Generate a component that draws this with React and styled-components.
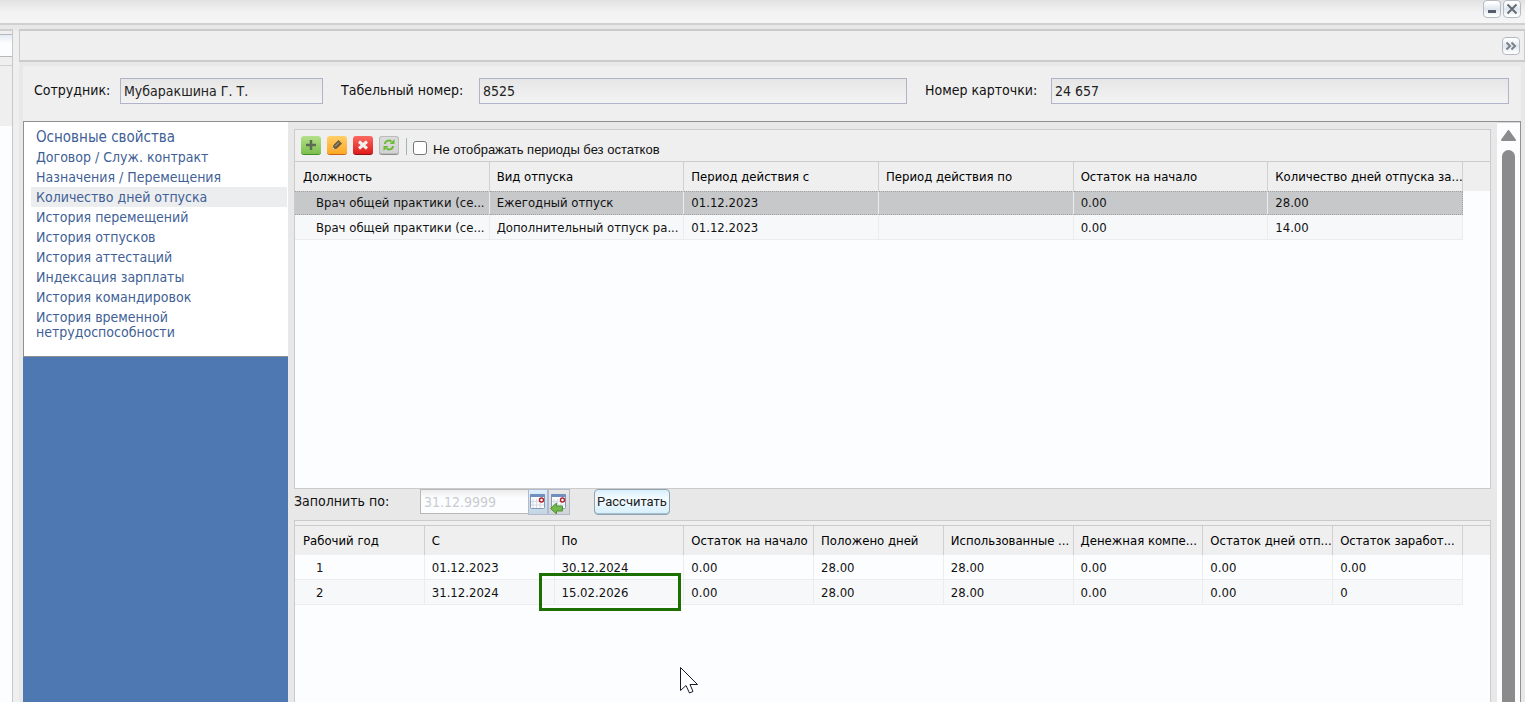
import React from "react";
import styled, { createGlobalStyle, css } from "styled-components";

const Global = createGlobalStyle`
  *, *::before, *::after { box-sizing: border-box; }
  body { margin: 0; background: #e8e8e8; color: #111; font: 13px/20px Tahoma, "DejaVu Sans Condensed", "Noto Sans", sans-serif; }
`;

const wide = css`font-family: Tahoma, "DejaVu Sans Condensed", "Noto Sans", sans-serif;`;

const Page = styled.div`
  position: relative;
  display: flex;
  flex-direction: column;
  min-height: 100vh;
  overflow: hidden;
`;

const TitleBar = styled.header`
  display: flex;
  justify-content: flex-end;
  gap: 2px;
  height: 25px;
  padding: 0 4px 0 0;
  border-bottom: 2px solid #d0d0d0;
  background: linear-gradient(#e2e2e2, #f2f2f2 50%, #f5f5f5);
`;

const ToolButton = styled.button`
  display: flex;
  width: 18px;
  height: 18px;
  padding: 0;
  border: 1px solid #b3bac1;
  border-radius: 4px;
  background: linear-gradient(#fff 10%, #dfe7ef 50%, #fff 95%);
`;

const Workspace = styled.div`
  display: flex;
  flex: 1;
  padding-top: 4px;
`;

const SideStrip = styled.aside`
  display: flex;
  flex-direction: column;
  width: 13px;
  border-top: 2px solid #cfcfcf;
  border-right: 1px solid #c8c8c8;
  background: #efefef;
`;

const StripField = styled.div`
  height: 23px;
  margin-top: 3px;
  border: solid #b8b8b8;
  border-width: 1px 0;
  background: linear-gradient(#e4ecf4, #fcfdff 40%);
`;

const StripHead = styled.div`
  height: 61px;
  margin-top: 8px;
  border-top: 1px solid #d0d0d0;
`;

const StripBody = styled.div`
  flex: 1;
  background: #fcfdff;
`;

const Splitter = styled.div`
  width: 6px;
  border-top: 2px solid #e8e8e8;
  background: #efefef;
`;

const Card = styled.section`
  display: flex;
  flex: 1;
  flex-direction: column;
  min-width: 0;
`;

const CardHead = styled.div`
  display: flex;
  align-items: center;
  justify-content: flex-end;
  height: 33px;
  padding-right: 4px;
  border: 1px solid #cbcbcb;
  border-width: 2px 1px 2px 1px;
  background: #efefef;
`;

const CardBody = styled.div`
  display: flex;
  flex: 1;
  flex-direction: column;
  margin: 4px 4px 0;
  background: #efefef;
`;

const Form = styled.form`
  display: flex;
  gap: 18px;
  padding: 12px 12px 17px 11px;
`;

const Field = styled.div`
  display: flex;
  flex: ${(p) => p.$flex};
  min-width: 0;
`;

const Label = styled.label`
  ${wide}
  flex: 0 0 ${(p) => p.$width}px;
  font-size: 14px;
  line-height: 24px;
  white-space: nowrap;
`;

const TextBox = styled.input`
  ${wide}
  flex: 1;
  min-width: 0;
  height: 26px;
  padding: 0 3px;
  border: 1px solid #b1b3c8;
  border-radius: 0;
  outline: none;
  background: linear-gradient(#e6e6e6, #f3f3f3);
  color: #222;
  font-size: 14px;
`;

const Content = styled.div`
  display: flex;
  flex: 1;
  border: 1px solid #909090;
  border-bottom: 0;
  background: #e8e8e8;
`;

const Sidebar = styled.nav`
  display: flex;
  flex: 0 0 264px;
  flex-direction: column;
`;

const NavList = styled.div`
  display: flex;
  flex-direction: column;
  height: 235px;
  padding: 5px 0 0 7px;
  border-bottom: 1px solid #8f8f8f;
  background: #fff;
`;

const NavLink = styled.a`
  ${wide}
  margin-right: 1px;
  padding: 0 5px;
  background: ${(p) => (p.$active ? "#ecedef" : "transparent")};
  color: #3f5f96;
  font-size: ${(p) => (p.$main ? 15 : 14)}px;
  line-height: 20px;
  text-decoration: none;
`;

const NavWrapLink = styled(NavLink)`
  padding: 3px 110px 0 5px;
  line-height: 15px;
`;

const Blue = styled.div`
  flex: 1;
  margin: 0 0 0 -1px;
  background: #4e78b2;
`;

const Main = styled.main`
  display: flex;
  flex: 1;
  flex-direction: column;
  min-width: 0;
  padding: 7px 6px 0;
`;

const Grid = styled.section`
  display: flex;
  flex-direction: column;
  flex: ${(p) => p.$flex};
  border: 1px solid #cbcbcb;
  border-bottom-width: ${(p) => (p.$open ? 0 : 1)}px;
  background: #fcfdff;
`;

const Toolbar = styled.div`
  display: flex;
  align-items: flex-start;
  gap: 6px;
  height: 32px;
  padding: 6px;
  border-bottom: 1px solid #cbcbcb;
  background: #efefef;
`;

const SlimBar = styled.div`
  height: 5px;
  border-bottom: 1px solid #cbcbcb;
  background: #efefef;
`;

const tones = {
  green: ["#b4e08a", "#7cc04c", "#3f8f2b"],
  orange: ["#ffcf6a", "#ffa822", "#c8641a"],
  red: ["#fb6a62", "#df1a1a", "#8f1212"],
  gray: ["#dcdcdc", "#d3d3d3", "#8e8e8e"],
};

const IconButton = styled.button`
  display: flex;
  align-items: center;
  justify-content: center;
  width: 20px;
  height: 19px;
  padding: 0;
  border: 0;
  border-bottom: 1px solid ${(p) => tones[p.$tone][2]};
  border-radius: 3px;
  background: linear-gradient(${(p) => tones[p.$tone][0]}, ${(p) => tones[p.$tone][1]});
  box-shadow: ${(p) => (p.$tone === "gray" ? "inset 0 0 0 1px #bcbcbc" : "none")};
`;

const Divider = styled.span`
  width: 1px;
  height: 17px;
  margin: 2px 0 0 1px;
  background: #a3b5ad;
`;

const Check = styled.label`
  display: flex;
  gap: 6px;
  padding-top: 4px;
  font: 13px/20px "Liberation Sans", sans-serif;
`;

const CheckInput = styled.input`
  width: 14px;
  height: 14px;
  margin: 1px 0 0;
  appearance: none;
  border: 1px solid #767676;
  border-radius: 3px;
  background: #fff;
`;

const TableHolder = styled.div`
  padding-right: 27px;
  background: linear-gradient(#efefef 29px, transparent 29px);
`;

const Table = styled.table`
  width: 100%;
  border-collapse: separate;
  border-spacing: 0;
  table-layout: fixed;
`;

const cell = css`
  height: 25px;
  padding: 0 0 0 7px;
  font-weight: 400;
  line-height: 20px;
  text-align: left;
  white-space: nowrap;
  &:first-child { padding-left: 8px; }
`;

const Th = styled.th`
  ${cell}
  height: 29px;
  border-right: 1px solid #d0d0d0;
  color: #000;
`;

const Td = styled.td`
  ${cell}
  padding-top: 2px;
  border-right: 1px solid #ececec;
  border-bottom: 1px solid #ececec;
  &:first-child { padding-left: 21px; }
`;

const Tr = styled.tr`
  background: ${(p) => (p.$selected ? "#c7c8ca" : p.$alt ? "#f7f8fa" : "#fcfdff")};
  ${(p) => p.$selected && css`
    & > td { height: 24px; padding-top: 0; padding-bottom: 1px; border-top: 1px dotted #a0a0a0; border-bottom: 1px dotted #a0a0a0; }
    & > td:last-child { border-right: 1px dotted #a0a0a0; }
  `}
`;

const MarkedTd = styled(Td)`
  position: relative;
  &::after {
    content: "";
    position: absolute;
    inset: -7px 2px -7px -16px;
    border: 3px solid #1c7000;
  }
`;

const FillRow = styled.form`
  display: flex;
  align-items: flex-start;
  height: 31px;
`;

const DateBox = styled(TextBox)`
  flex: 0 0 108px;
  height: 25px;
  border-color: #b8b8b8;
  border-right: 0;
  background: linear-gradient(#ebebeb, #fcfdff 35%);
  color: #c9cbd0;
`;

const DateButton = styled.button`
  display: flex;
  align-items: center;
  justify-content: center;
  width: ${(p) => (p.$lit ? 20 : 22)}px;
  height: 26px;
  padding: 0;
  border: 1px solid #b4b8cc;
  background: ${(p) => (p.$lit ? "linear-gradient(#dceffa, #c2d5e2)" : "linear-gradient(#e8e8e8, #d2d3d6)")};
`;

const PushButton = styled.button`
  min-width: 76px;
  height: 26px;
  margin-left: 24px;
  padding: 0 2px;
  border: 1px solid #8fa3b0;
  border-radius: 4px;
  background: linear-gradient(#d8effb, #f4fcff 35%, #d6effb);
  box-shadow: inset 0 -1px 0 #a9bfcc;
  color: #222;
  font: 13px/22px Roboto, sans-serif;
`;

const Scrollbar = styled.div`
  display: flex;
  flex: 0 0 23px;
  flex-direction: column;
  align-items: center;
  gap: 9px;
  padding-top: 7px;
  border-top: 1px solid #d8d8d8;
  background: #fdfdff;
`;

const Thumb = styled.div`
  flex: 1;
  width: 13px;
  border-radius: 7px 7px 0 0;
  background: #8b8b8b;
`;

const Pointer = styled.svg`
  position: absolute;
  top: 666px;
  left: 679px;
  pointer-events: none;
`;

function Calendar({ back }) {
  return (
    <svg width="18" height="24" viewBox="0 0 18 24" aria-hidden="true">
      <rect x="1.5" y="4.5" width="14" height="14" rx="1" fill="#fbfbfd" stroke="#7f97b8" />
      <rect x="1" y="4" width="15" height="3" rx="1" fill="#6f8fbe" />
      <path d="M4 9v9M7.500 9v9M11 9v9M2 11.500h13M2 15h13" stroke="#d5dae4" fill="none" />
      <circle cx="12.500" cy="10" r="2" fill="#fff" stroke="#b31f2a" strokeWidth="1.400" />
      {back && <path d="M0.500 18.500l6-5.500v3h6v5h-6v3z" fill="#74b84c" stroke="#4b9530" />}
    </svg>
  );
}

const links = [
  "Договор / Служ. контракт",
  "Назначения / Перемещения",
  "Количество дней отпуска",
  "История перемещений",
  "История отпусков",
  "История аттестаций",
  "Индексация зарплаты",
  "История командировок",
];

const periodHead = ["Должность", "Вид отпуска", "Период действия с", "Период действия по", "Остаток на начало", "Количество дней отпуска за..."];
const periodRows = [
  ["Врач общей практики (се...", "Ежегодный отпуск", "01.12.2023", "", "0.00", "28.00"],
  ["Врач общей практики (се...", "Дополнительный отпуск ра...", "01.12.2023", "", "0.00", "14.00"],
];
const yearHead = ["Рабочий год", "С", "По", "Остаток на начало", "Положено дней", "Использованные ...", "Денежная компе...", "Остаток дней отп...", "Остаток заработ..."];
const yearRows = [
  ["1", "01.12.2023", "30.12.2024", "0.00", "28.00", "28.00", "0.00", "0.00", "0.00"],
  ["2", "31.12.2024", "15.02.2026", "0.00", "28.00", "28.00", "0.00", "0.00", "0"],
];

function DataTable({ head, rows, selected, marked }) {
  return (
    <TableHolder>
      <Table>
        <thead>
          <tr>{head.map((h) => <Th key={h} scope="col">{h}</Th>)}</tr>
        </thead>
        <tbody>
          {rows.map((row, r) => (
            <Tr key={r} $selected={selected === r} $alt={r % 2 === 1}>
              {row.map((value, c) => {
                const Cell = marked && marked[0] === r && marked[1] === c ? MarkedTd : Td;
                return <Cell key={c}>{value}</Cell>;
              })}
            </Tr>
          ))}
        </tbody>
      </Table>
    </TableHolder>
  );
}

export default function App() {
  return (
    <Page>
      <Global />
      <TitleBar>
        <ToolButton type="button" aria-label="Свернуть">
          <svg width="16" height="16" viewBox="0 0 16 16"><path d="M4 10.500h8" stroke="#555e68" strokeWidth="3" /></svg>
        </ToolButton>
        <ToolButton type="button" aria-label="Закрыть">
          <svg width="16" height="16" viewBox="0 0 16 16"><path d="M3.500 3.500l9 9M12.500 3.500l-9 9" stroke="#666c74" strokeWidth="2" /></svg>
        </ToolButton>
      </TitleBar>
      <Workspace>
        <SideStrip>
          <StripField />
          <StripHead />
          <StripBody />
        </SideStrip>
        <Splitter />
        <Card>
          <CardHead>
            <ToolButton type="button" aria-label="Развернуть">
              <svg width="16" height="16" viewBox="0 0 16 16"><path d="M3.500 4.500L7 8l-3.500 3.500M8.500 4.500L12 8l-3.500 3.500" stroke="#7b8188" strokeWidth="2" fill="none" /></svg>
            </ToolButton>
          </CardHead>
          <CardBody>
            <Form>
              <Field $flex="0 0 289px">
                <Label htmlFor="person" $width={86}>Сотрудник:</Label>
                <TextBox id="person" readOnly value="Мубаракшина Г. Т." />
              </Field>
              <Field $flex="566 1 0">
                <Label htmlFor="tab" $width={138}>Табельный номер:</Label>
                <TextBox id="tab" readOnly value="8525" />
              </Field>
              <Field $flex="584 1 0">
                <Label htmlFor="cardno" $width={126}>Номер карточки:</Label>
                <TextBox id="cardno" readOnly value="24 657" />
              </Field>
            </Form>
            <Content>
              <Sidebar>
                <NavList>
                  <NavLink href="#main" $main>Основные свойства</NavLink>
                  {links.map((text, i) => (
                    <NavLink key={text} href={`#s${i}`} $active={i === 2}>{text}</NavLink>
                  ))}
                  <NavWrapLink href="#sick">История временной нетрудоспособности</NavWrapLink>
                </NavList>
                <Blue />
              </Sidebar>
              <Main>
                <Grid $flex="0 0 360px">
                  <Toolbar>
                    <IconButton type="button" $tone="green" aria-label="Добавить">
                      <svg width="14" height="14" viewBox="0 0 14 14"><path d="M7 2v10M2 7h10" stroke="#5c6b54" strokeWidth="2.500" /></svg>
                    </IconButton>
                    <IconButton type="button" $tone="orange" aria-label="Изменить">
                      <svg width="14" height="14" viewBox="0 0 14 14"><path d="M2.500 11.500l1-4.500 5-5 3.500 3.500-5 5z" fill="#6a5a44" /><path d="M5 8.500l4-4" stroke="#c9b48c" /><path d="M2.500 11.500l.5-2 1.500 1.500z" fill="#fff" /></svg>
                    </IconButton>
                    <IconButton type="button" $tone="red" aria-label="Удалить">
                      <svg width="14" height="14" viewBox="0 0 14 14"><path d="M3 3.500l8 7M11 3.500l-8 7" stroke="#f3f0f0" strokeWidth="3" /></svg>
                    </IconButton>
                    <IconButton type="button" $tone="gray" aria-label="Обновить">
                      <svg width="14" height="14" viewBox="0 0 14 14"><path d="M3 6C3 3 7 1.500 9.500 3.500M11 8C11 11 7 12.500 4.500 10.500" stroke="#6cba36" strokeWidth="2" fill="none" /><path d="M12.500 1V6H7.500zM1.500 13V8h5z" fill="#6cba36" /></svg>
                    </IconButton>
                    <Divider />
                    <Check>
                      <CheckInput type="checkbox" />
                      Не отображать периоды без остатков
                    </Check>
                  </Toolbar>
                  <DataTable head={periodHead} rows={periodRows} selected={0} />
                </Grid>
                <FillRow>
                  <Label htmlFor="until" $width={126}>Заполнить по:</Label>
                  <DateBox id="until" readOnly value="31.12.9999" />
                  <DateButton type="button" $lit aria-label="Выбрать дату"><Calendar /></DateButton>
                  <DateButton type="button" aria-label="Вернуть дату"><Calendar back /></DateButton>
                  <PushButton type="button">Рассчитать</PushButton>
                </FillRow>
                <Grid $flex="1" $open>
                  <SlimBar />
                  <DataTable head={yearHead} rows={yearRows} marked={[1, 2]} />
                </Grid>
              </Main>
              <Scrollbar>
                <svg width="15" height="11" viewBox="0 0 15 11" aria-hidden="true"><path d="M7.500 1L14 10H1z" fill="#8b8b8b" stroke="#8b8b8b" strokeWidth="2" strokeLinejoin="round" /></svg>
                <Thumb />
              </Scrollbar>
            </Content>
          </CardBody>
        </Card>
      </Workspace>
      <Pointer width="20" height="29" viewBox="0 0 20 29" aria-hidden="true">
        <path d="M1.500 1.500V24.500L7 19.500L10.500 27L14 25.500L11 18.500H18.500Z" fill="#fff" stroke="#1a1a2a" />
      </Pointer>
    </Page>
  );
}
